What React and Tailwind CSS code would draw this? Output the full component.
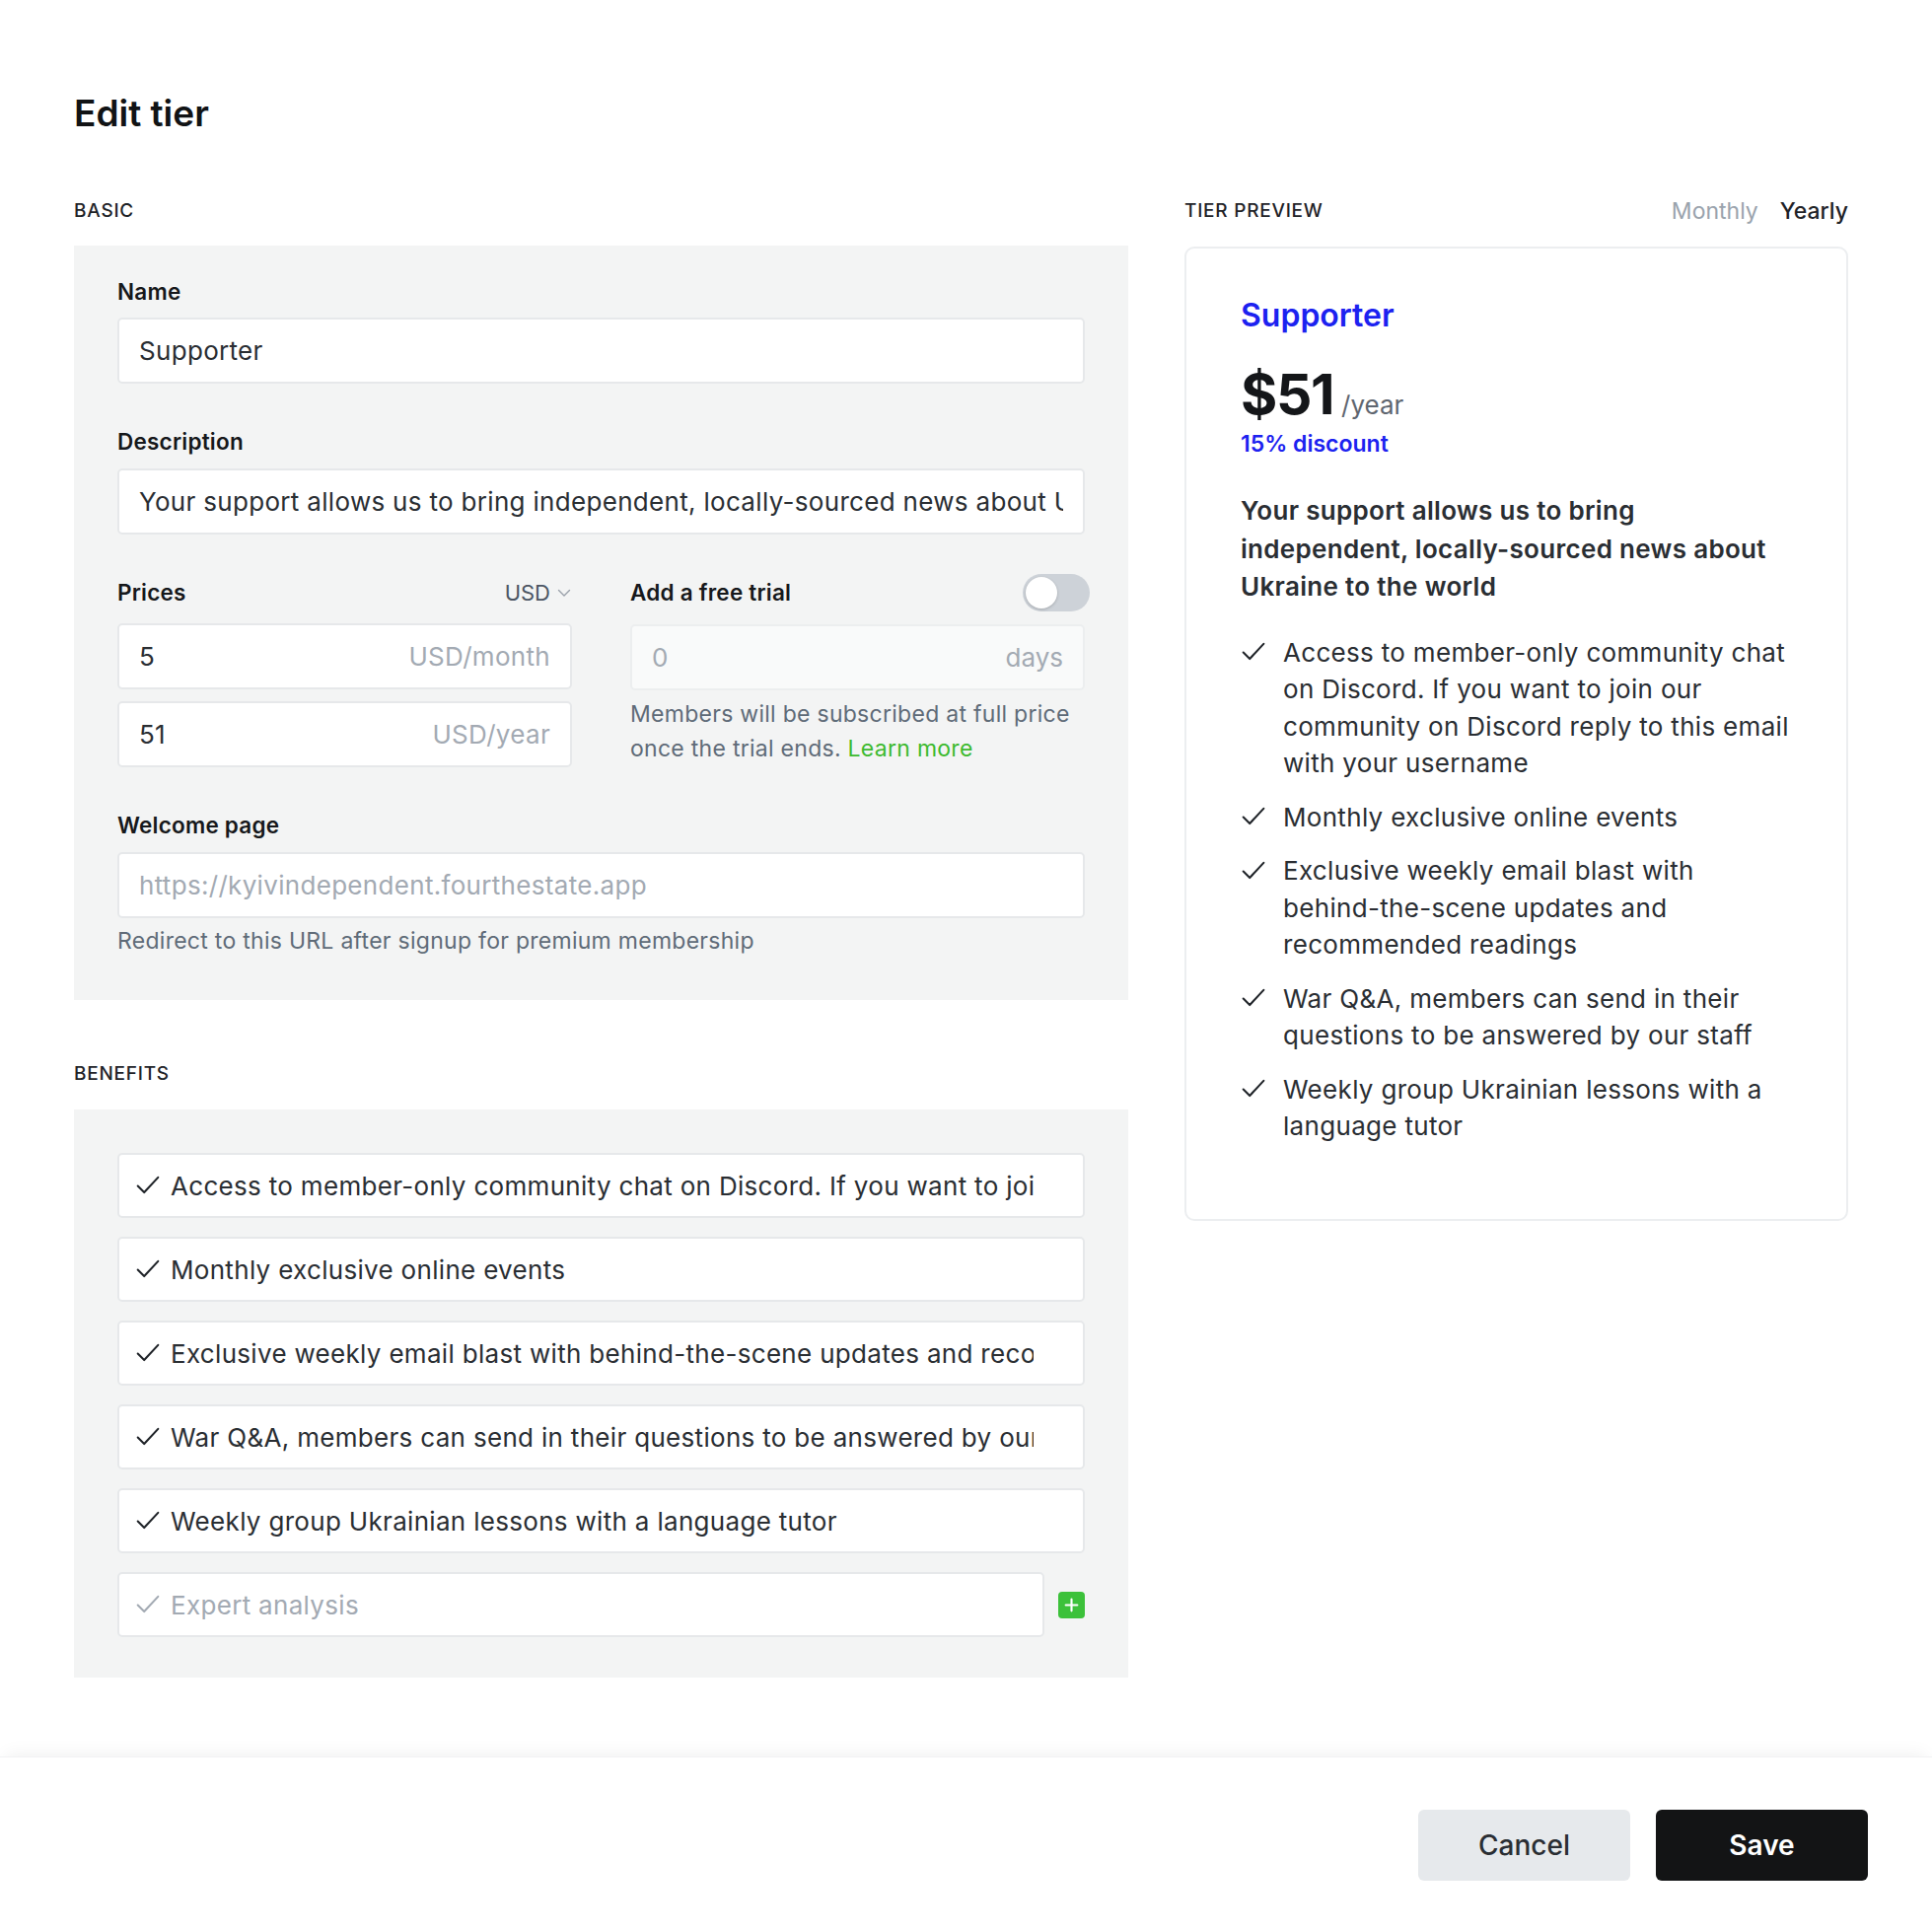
import React from 'react';

const benefits = [
  'Access to member-only community chat on Discord. If you want to join our community on Discord reply to this email with your username',
  'Monthly exclusive online events',
  'Exclusive weekly email blast with behind-the-scene updates and recommended readings',
  'War Q&A, members can send in their questions to be answered by our staff',
  'Weekly group Ukrainian lessons with a language tutor',
];

function Check({ className = 'text-[#1f2328]', size = 24 }) {
  return (
    <svg width={size} height={size} viewBox="0 0 24 24" fill="none" className={className}>
      <path d="M2.5 12.5l6 6L21.5 4.5" stroke="currentColor" strokeWidth="1.9" strokeLinecap="round" strokeLinejoin="round" />
    </svg>
  );
}

// keep "behind-the-scene" together like the reference wrap
function PreviewText({ text }) {
  const word = 'behind-the-scene';
  const i = text.indexOf(word);
  if (i === -1) return text;
  return (
    <>
      {text.slice(0, i)}
      <span className="whitespace-nowrap">{word}</span>
      {text.slice(i + word.length)}
    </>
  );
}

function Label({ children }) {
  return <div className="text-[22.5px] leading-[28px] font-semibold tracking-[0.01em] text-[#16181b]">{children}</div>;
}

function TextInput({ value, placeholder, className = '' }) {
  return (
    <input
      readOnly
      value={value}
      placeholder={placeholder}
      className={`h-[67px] w-full rounded-[5px] border-2 border-[#e6e8ea] bg-white pl-[20px] pr-[20px] text-[26px] tracking-[0.012em] text-[#2a2e33] outline-none placeholder:text-[#a3aab3] ${className}`}
    />
  );
}

function PriceInput({ value, unit }) {
  return (
    <div className="flex h-[67px] items-center justify-between rounded-[5px] border-2 border-[#e6e8ea] bg-white px-[20px] text-[26px] tracking-[0.012em]">
      <span className="text-[#2a2e33]">{value}</span>
      <span className="text-[#a3aab3]">{unit}</span>
    </div>
  );
}

export default function App() {
  return (
    <div className="min-h-screen bg-white font-['Inter',sans-serif] text-[#1f2328]">
      <div className="px-[75px] pt-[93px]">
        <h1 className="text-[37px] leading-[44px] font-semibold text-[#111315]">Edit tier</h1>

        <div className="mt-[65px] flex gap-[57px]">
          {/* left column */}
          <div className="w-[1069px]">
            <div className="text-[19px] leading-[24px] font-medium tracking-[0.04em] text-[#1f2328]">BASIC</div>
            <div className="mt-[23px] bg-[#f3f4f4] px-[44px] pt-[33px] pb-[45px]">
              <Label>Name</Label>
              <div className="mt-[12px]">
                <TextInput value="Supporter" />
              </div>

              <div className="mt-[45px]">
                <Label>Description</Label>
              </div>
              <div className="mt-[13px]">
                <TextInput value="Your support allows us to bring independent, locally-sourced news about Ukraine to the world" />
              </div>

              <div className="mt-[40px] grid grid-cols-2 gap-[59px]">
                <div>
                  <div className="flex h-[38px] items-center justify-between">
                    <Label>Prices</Label>
                    <div className="flex items-center gap-[6px] text-[22px] text-[#4b5563]">
                      USD
                      <svg width="16" height="16" viewBox="0 0 16 16" fill="none" className="text-[#9aa1aa]">
                        <path d="M2.5 5.5l5.5 5.5 5.5-5.5" stroke="currentColor" strokeWidth="1.4" strokeLinecap="round" strokeLinejoin="round" />
                      </svg>
                    </div>
                  </div>
                  <div className="mt-[12px]">
                    <PriceInput value="5" unit="USD/month" />
                  </div>
                  <div className="mt-[12px]">
                    <PriceInput value="51" unit="USD/year" />
                  </div>
                </div>

                <div>
                  <div className="flex h-[38px] items-center justify-between">
                    <Label>Add a free trial</Label>
                    <div className="mr-[-5px] flex h-[38px] w-[68px] items-center rounded-full bg-[#cdd2d8] px-[3px]">
                      <div className="h-[32px] w-[32px] rounded-full bg-white shadow-[0_1px_3px_rgba(0,0,0,0.2)]" />
                    </div>
                  </div>
                  <div className="mt-[13px] flex h-[67px] items-center justify-between rounded-[5px] border-2 border-[#eceeef] bg-[#f9fafa] px-[20px] text-[26px] text-[#a3aab3]">
                    <span>0</span>
                    <span>days</span>
                  </div>
                  <p className="mt-[7px] text-[23px] leading-[35px] tracking-[0.012em] text-[#5f6b78]">
                    Members will be subscribed at full price once the trial ends.{' '}
                    <span className="text-[#3dba2f]">Learn more</span>
                  </p>
                </div>
              </div>

              <div className="mt-[45px]">
                <Label>Welcome page</Label>
              </div>
              <div className="mt-[13px]">
                <TextInput placeholder="https://kyivindependent.fourthestate.app" />
              </div>
              <p className="mt-[8px] text-[23px] leading-[30px] tracking-[0.012em] text-[#5f6b78]">
                Redirect to this URL after signup for premium membership
              </p>
            </div>

            <div className="mt-[63px] text-[19px] leading-[24px] font-medium tracking-[0.04em] text-[#1f2328]">BENEFITS</div>
            <div className="mt-[24px] flex flex-col gap-[19px] bg-[#f3f4f4] px-[44px] pt-[44px] pb-[41px]">
              {benefits.map((b) => (
                <div key={b} className="flex h-[66px] items-center rounded-[5px] border-2 border-[#e6e8ea] bg-white pl-[16px] pr-[50px]">
                  <Check className="shrink-0 text-[#1f2328]" size={26} />
                  <input
                    readOnly
                    value={b}
                    className="ml-[10px] min-w-0 flex-1 bg-transparent text-[26px] tracking-[0.012em] text-[#2a2e33] outline-none"
                  />
                </div>
              ))}
              <div className="flex items-center gap-[14px]">
                <div className="flex h-[66px] flex-1 items-center rounded-[5px] border-2 border-[#e6e8ea] bg-white pl-[16px] pr-[38px]">
                  <Check className="shrink-0 text-[#a3aab3]" size={26} />
                  <input
                    readOnly
                    placeholder="Expert analysis"
                    className="ml-[10px] min-w-0 flex-1 bg-transparent text-[26px] tracking-[0.012em] outline-none placeholder:text-[#a3aab3]"
                  />
                </div>
                <div className="flex h-[27px] w-[27px] items-center justify-center rounded-[4px] bg-[#3cc13a]">
                  <svg width="17" height="17" viewBox="0 0 16 16" fill="none">
                    <path d="M8 2.5v11M2.5 8h11" stroke="white" strokeWidth="2" strokeLinecap="round" />
                  </svg>
                </div>
              </div>
            </div>
          </div>

          {/* right column */}
          <div className="w-[673px]">
            <div className="flex items-center justify-between">
              <div className="text-[19px] leading-[24px] font-medium tracking-[0.04em] text-[#1f2328]">TIER PREVIEW</div>
              <div className="flex gap-[22px] text-[23px] leading-[24px]">
                <span className="text-[#9aa3ad]">Monthly</span>
                <span className="font-medium text-[#1f2328]">Yearly</span>
              </div>
            </div>

            <div className="mt-[24px] rounded-[10px] border-2 border-[#eceef0] pt-[48px] pb-[75px] pl-[55px] pr-[44px]">
              <div className="text-[32px] leading-[40px] font-semibold text-[#1c22f0]">Supporter</div>
              <div className="mt-[28px] flex items-baseline gap-[8px]">
                <span className="text-[57px] leading-[64px] font-bold tracking-[-0.025em] text-[#141619]">$51</span>
                <span className="text-[26px] text-[#5f6670]">/year</span>
              </div>
              <div className="mt-[3px] text-[23px] leading-[30px] font-semibold text-[#1c22f0]">15% discount</div>
              <p className="mt-[34px] max-w-[560px] text-[26px] leading-[38.5px] font-semibold tracking-[0.012em] text-[#2a2e33]">
                Your support allows us to bring independent, locally-sourced news about Ukraine to the world
              </p>
              <ul className="mt-[28px] flex flex-col gap-[17px]">
                {benefits.map((b) => (
                  <li key={b} className="flex gap-[17px]">
                    <div className="flex h-[37.5px] shrink-0 items-center">
                      <Check className="text-[#1f2328]" size={26} />
                    </div>
                    <span className="text-[26px] leading-[37.5px] tracking-[0.012em] text-[#2a2e33]">
                      <PreviewText text={b} />
                    </span>
                  </li>
                ))}
              </ul>
            </div>
          </div>
        </div>
      </div>

      <footer className="mt-[80px] flex justify-end gap-[26px] border-t border-[#f1f2f3] bg-white pt-[53px] pr-[65px] pb-[53px] shadow-[0_-10px_16px_-6px_rgba(0,0,0,0.05)]">
        <button className="h-[72px] w-[215px] rounded-[6px] bg-[#e6e9ec] text-[28px] font-medium text-[#2a2e33]">Cancel</button>
        <button className="h-[72px] w-[215px] rounded-[6px] bg-[#131415] text-[28px] font-semibold text-white">Save</button>
      </footer>
    </div>
  );
}
